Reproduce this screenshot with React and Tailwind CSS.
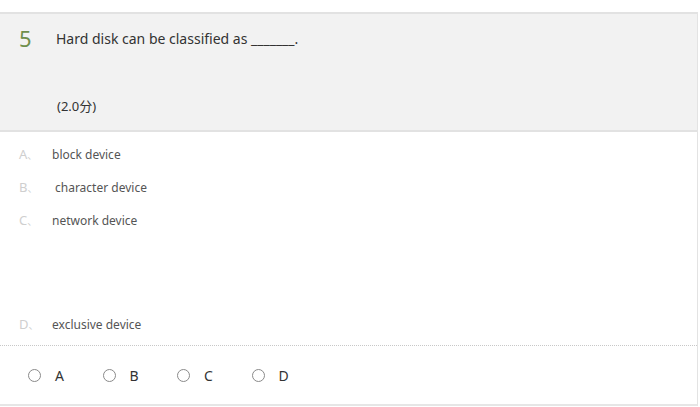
import React from 'react';

const options = [
  { key: 'A', text: 'block device', pad: 'pl-0' },
  { key: 'B', text: 'character device', pad: 'pl-[3px]' },
  { key: 'C', text: 'network device', pad: 'pl-0' },
];

const Option = ({ letter, text, pad }) => (
  <div className="flex items-center h-[33px]">
    <span className="w-[33px] pl-[19px] text-[13px] text-[#cfcfcf]">{letter}<span className="text-[10px]">、</span></span>
    <span className={`ml-[19px] text-[12px] text-[#555] ${pad}`}>{text}</span>
  </div>
);

const App = () => {
  return (
    <div className="w-[700px] h-[407px] bg-white overflow-hidden" style={{ fontFamily: '"Noto Sans", "Noto Sans CJK SC", sans-serif' }}>
      <div className="mt-[12px] w-[698px] border-r border-[#e3e3e3]">
        <div className="border-t-2 border-b-2 border-[#e2e2e2] bg-[#f2f2f2] h-[120px] pt-[9px]">
          <div className="flex items-center">
            <span className="w-[56px] pl-[19px] text-[22px] leading-[30px] text-[#6f8f4c]">5</span>
            <span className="text-[14px] text-[#333]">Hard disk can be classified as _______.</span>
          </div>
          <div className="mt-[44px] pl-[57px] text-[13px] text-[#333]">(2.0分)</div>
        </div>
        <div className="pt-[6px]">
          {options.map((o) => (
            <Option key={o.key} letter={o.key} text={o.text} pad={o.pad} />
          ))}
          <div className="mt-[71px]">
            <Option letter="D" text="exclusive device" pad="pl-0" />
          </div>
        </div>
        <div className="mt-[4px] border-t border-dotted border-[#c8c8c8]" />
        <div className="flex items-center h-[60px] pl-[28px] border-b-2 border-[#e6e6e6]">
          {['A', 'B', 'C', 'D'].map((l) => (
            <div key={l} className="flex items-center w-[74.5px]">
              <span className="w-[13px] h-[13px] rounded-full border border-[#8a8a8a]" />
              <span className="ml-[14px] text-[14px] text-[#333]">{l}</span>
            </div>
          ))}
        </div>
      </div>
    </div>
  );
};

export default App;
